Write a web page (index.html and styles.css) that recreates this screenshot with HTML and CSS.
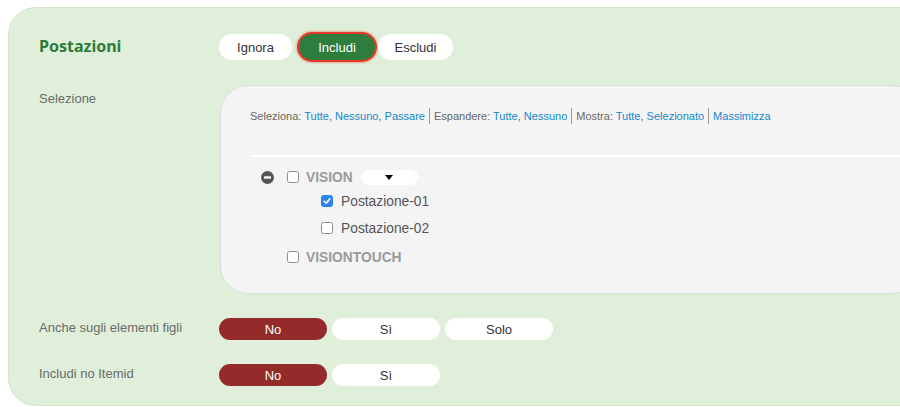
FILE: index.html
```html
<!DOCTYPE html>
<html lang="it">
<head>
<meta charset="utf-8">
<title>Postazioni</title>
<link rel="stylesheet" href="styles.css">
</head>
<body>
<div class="panel">
  <div class="row row-head">
    <div class="label title">Postazioni</div>
    <div class="btns">
      <span class="btn btn-ignora">Ignora</span>
      <span class="btn btn-includi active-green">Includi</span>
      <span class="btn btn-escludi">Escludi</span>
    </div>
  </div>

  <div class="row row-sel">
    <div class="label label-sel">Selezione</div>
    <div class="selbox">
      <div class="toolbar">
        <span class="grp">Seleziona: <a>Tutte</a>, <a>Nessuno</a>, <a>Passare</a></span><span class="sep"></span><span class="grp">Espandere: <a>Tutte</a>, <a>Nessuno</a></span><span class="sep"></span><span class="grp">Mostra: <a>Tutte</a>, <a>Selezionato</a></span><span class="sep"></span><span class="grp"><a>Massimizza</a></span>
      </div>
      <div class="tree">
        <div class="node node-parent">
          <svg class="toggle" width="13" height="13" viewBox="0 0 13 13"><circle cx="6.5" cy="6.5" r="6.5" fill="#555"/><rect x="3" y="5.3" width="7" height="2.4" fill="#fff"/></svg>
          <span class="cb"></span>
          <span class="group-name">VISION</span>
          <span class="dd"><svg width="8" height="5" viewBox="0 0 8 5"><path d="M0 0H8L4 5Z" fill="#000"/></svg></span>
        </div>
        <div class="node node-child">
          <span class="cb cb-on"><svg width="10" height="10" viewBox="0 0 10 10"><path d="M2.2 5.2L4.2 7.2L7.9 2.8" fill="none" stroke="#fff" stroke-width="1.6" stroke-linecap="round" stroke-linejoin="round"/></svg></span>
          <span class="item-name">Postazione-01</span>
        </div>
        <div class="node node-child node-child2">
          <span class="cb"></span>
          <span class="item-name">Postazione-02</span>
        </div>
        <div class="node node-parent2">
          <span class="cb"></span>
          <span class="group-name">VISIONTOUCH</span>
        </div>
      </div>
    </div>
  </div>

  <div class="row row-opt row-opt1">
    <div class="label">Anche sugli elementi figli</div>
    <div class="btns opt-btns">
      <span class="btn obtn active-red">No</span>
      <span class="btn obtn">Sì</span>
      <span class="btn obtn">Solo</span>
    </div>
  </div>

  <div class="row row-opt row-opt2">
    <div class="label">Includi no Itemid</div>
    <div class="btns opt-btns">
      <span class="btn obtn active-red">No</span>
      <span class="btn obtn">Sì</span>
    </div>
  </div>
</div>
</body>
</html>
```

FILE: styles.css
```css
html, body {
  margin: 0;
  padding: 0;
  background: #ffffff;
  overflow: hidden;
}
body {
  width: 900px;
  height: 407px;
  font-family: "Liberation Sans", Arial, sans-serif;
  color: #333;
}
.panel {
  box-sizing: border-box;
  margin: 7px 0 0 8px;
  width: 1000px;
  height: 399px;
  background: #dfefd9;
  border: 1px solid #d2e6cc;
  border-radius: 28px;
  padding: 26px 0 0 30px;
}
.row {
  display: flex;
}
.label {
  flex: 0 0 180px;
  font-size: 13px;
  color: #6a6a6a;
}
.row-head {
  align-items: center;
  height: 26px;
}
.title {
  font-family: "Noto Sans", sans-serif;
  font-weight: 700;
  font-size: 16px;
  color: #2e7b39;
  position: relative;
  top: -1px;
}
.btns {
  display: flex;
  align-items: center;
}
.btn {
  display: flex;
  align-items: center;
  justify-content: center;
  box-sizing: border-box;
  height: 26px;
  border-radius: 13px;
  background: #ffffff;
  font-size: 13px;
  color: #333;
}
.btn-ignora { width: 73px; }
.btn-includi { width: 76px; margin-left: 7px; }
.btn-escludi { width: 75px; margin-left: 3px; }
.active-green {
  background: #2e7d3c;
  color: #ffffff;
  box-shadow: 0 0 0 2px #e8382d, 0 0 2px 3px rgba(232, 56, 45, 0.35);
}

.row-sel {
  margin-top: 25px;
}
.label-sel {
  flex-basis: 181px;
  padding-top: 6px;
  line-height: 15px;
}
.selbox {
  box-sizing: border-box;
  width: 700px;
  height: 209px;
  background: #f4f4f4;
  border: 1px solid #dcdcdc;
  border-radius: 28px;
  padding: 23px 0 0 29px;
}
.toolbar {
  display: flex;
  align-items: center;
  height: 14px;
  font-size: 11px;
  color: #666;
  white-space: nowrap;
}
.toolbar a {
  color: #1188cc;
}
.sep {
  display: inline-block;
  width: 1px;
  height: 16px;
  background: #9a9a9a;
  margin: 0 4px;
}
.tree {
  margin-top: 32px;
  border-top: 2px solid #ffffff;
  padding-top: 8px;
}
.node {
  display: flex;
  align-items: center;
  height: 24px;
}
.toggle {
  margin-left: 11px;
  margin-right: 13px;
  flex: none;
}
.cb {
  box-sizing: border-box;
  width: 12px;
  height: 12px;
  border: 1px solid #8e8e8e;
  border-radius: 2.5px;
  background: #ffffff;
  flex: none;
  display: flex;
  align-items: center;
  justify-content: center;
}
.cb-on {
  background: #2c84ee;
  border-color: #2c84ee;
}
.group-name {
  margin-left: 7px;
  font-size: 13.8px;
  font-weight: 700;
  color: #9a9a9a;
}
.dd {
  margin-left: 8px;
  width: 57px;
  height: 15px;
  border-radius: 8px;
  background: #ffffff;
  display: flex;
  align-items: center;
  justify-content: center;
}
.node-child {
  padding-left: 71px;
}
.node-child2 {
  margin-top: 3px;
}
.item-name {
  margin-left: 8px;
  font-size: 13.8px;
  color: #555;
}
.node-parent2 {
  padding-left: 37px;
  margin-top: 5px;
}

.row-opt {
  align-items: center;
}
.row-opt1 {
  margin-top: 24px;
}
.row-opt2 {
  margin-top: 24px;
}
.row-opt .label {
  position: relative;
  top: -2px;
}
.opt-btns {
  gap: 5px;
}
.obtn {
  width: 108px;
  height: 22px;
  border-radius: 11px;
  font-size: 13px;
}
.active-red {
  background: #952a2a;
  color: #ffffff;
}
```
